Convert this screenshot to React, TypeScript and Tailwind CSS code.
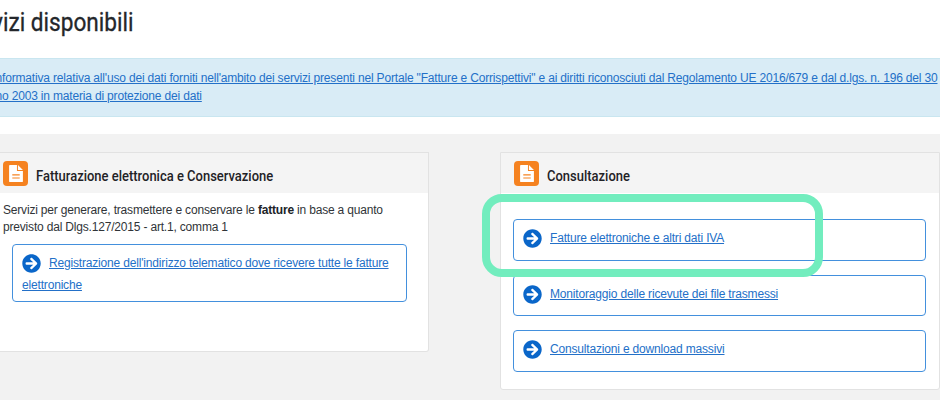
import type { ReactNode } from "react";
import { FaArrowCircleRight } from "react-icons/fa";

function DocumentIcon() {
  return (
    <svg className="h-[17px] w-[14px]" viewBox="0 0 13 16" fill="none">
      <path d="M0.8 0H7.4V5.6H13V15.2Q13 16 12.2 16H0.8Q0 16 0 15.2V0.8Q0 0 0.8 0Z" fill="#fff" />
      <path d="M8.3 0L13 4.7H8.3Z" fill="#fff" />
      <path d="M3 9.3H10M3 12.2H10" stroke="#f58220" strokeWidth="1.1" />
    </svg>
  );
}

function CardHeader({ title }: { title: string }) {
  return (
    <div className="flex h-[40px] bg-[#f4f4f4] pt-[8px]">
      <span className="flex h-[25px] w-[25px] shrink-0 items-center justify-center rounded-[4px] bg-[#f58220]">
        <DocumentIcon />
      </span>
      <h2 className="ml-[7.5px] origin-left scale-x-[0.895] pt-[5px] font-['Roboto',sans-serif] text-[14.5px] leading-[22px] font-medium whitespace-nowrap text-[#1f2226]">
        {title}
      </h2>
    </div>
  );
}

function ServiceLink({ children, className }: { children: ReactNode; className: string }) {
  return (
    <div className={`rounded-[4px] border border-[#4390dd] ${className}`}>
      <FaArrowCircleRight className="mr-[8px] inline-block h-[19px] w-[19px] align-[-6px] text-[#0a66c9]" />
      <a href="#" className="text-[#2370c8] underline">
        {children}
      </a>
    </div>
  );
}

export default function App() {
  return (
    <main className="relative flex h-[400px] w-[940px] flex-col overflow-hidden bg-white font-['Liberation_Sans',Arial,sans-serif] text-[12px] tracking-[-0.175px] text-[#303438]">
      <h1 className="-ml-[8px] h-[58px] w-[200px] origin-left scale-x-[0.905] pt-[7px] font-['Roboto',sans-serif] text-[25px] leading-[32px] font-normal tracking-normal whitespace-nowrap text-[#24272b] [-webkit-text-stroke:0.3px_#24272b]">
        vizi disponibili
      </h1>
      <div className="h-[59px] border-y border-[#c9e6f0] bg-[#d9ecf6] pt-[11px] leading-[17.5px] whitespace-nowrap">
        <a href="#" className="-ml-[4.5px] block text-[#2370c8] underline">
          nformativa relativa all'uso dei dati forniti nell'ambito dei servizi presenti nel Portale "Fatture e Corrispettivi" e ai diritti riconosciuti dal Regolamento UE 2016/679 e dal d.lgs. n. 196 del 30
          <br />
          no 2003 in materia di protezione dei dati
        </a>
      </div>
      <div className="mt-[17px] flex grow items-start bg-[#f2f2f2] pt-[18px]">
        <section className="h-[200px] w-[429px] shrink-0 rounded-br-[3px] border border-l-0 border-[#e2e2e2] bg-white">
          <div className="bg-[#f4f4f4] pl-[3px] tracking-normal">
            <CardHeader title="Fatturazione elettronica e Conservazione" />
          </div>
          <p className="pt-[9px] pl-[3px] leading-[17px] tracking-[-0.185px] whitespace-nowrap">
            Servizi per generare, trasmettere e conservare le <b className="text-[#202327]">fatture</b> in base a quanto
            <br />
            previsto dal Dlgs.127/2015 - art.1, comma 1
          </p>
          <ServiceLink className="mt-[8px] ml-[12px] h-[58px] w-[395px] pt-[7px] pl-[9px] leading-[22px]">
            Registrazione dell'indirizzo telematico dove ricevere tutte le fatture elettroniche
          </ServiceLink>
        </section>
        <section className="ml-[71px] h-[238px] w-[440px] shrink-0 rounded-b-[3px] border border-[#e2e2e2] bg-white">
          <div className="bg-[#f4f4f4] pl-[13px] tracking-normal">
            <CardHeader title="Consultazione" />
          </div>
          <div className="flex flex-col gap-[14px] pt-[26px] pl-[12px]">
            <ServiceLink className="h-[41.5px] w-[413px] pt-[7px] pl-[9px] leading-[22px]">
              Fatture elettroniche e altri dati IVA
            </ServiceLink>
            <ServiceLink className="h-[41.5px] w-[413px] pt-[7px] pl-[9px] leading-[22px]">
              Monitoraggio delle ricevute dei file trasmessi
            </ServiceLink>
            <ServiceLink className="h-[41.5px] w-[413px] pt-[7px] pl-[9px] leading-[22px]">
              Consultazioni e download massivi
            </ServiceLink>
          </div>
        </section>
      </div>
      <div className="pointer-events-none absolute top-[194px] left-[482px] h-[83px] w-[341px] rounded-[20px] border-8 border-[#72edbe]" />
    </main>
  );
}
